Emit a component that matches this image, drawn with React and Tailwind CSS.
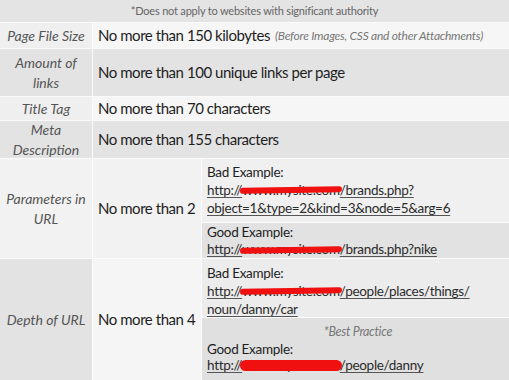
import React from 'react';

const font = { fontFamily: 'Lato, "Open Sans", sans-serif' };

// red marker stroke that hides the domain name
const Redact = ({ children, thick }) => (
  <span className="relative inline-block">
    {children}
    <span
      className={`absolute left-[-2px] right-[-2px] rounded-full bg-[#f01010] ${thick ? 'top-[3px] h-[11px]' : 'top-[6px] h-[6px] -rotate-1'}`}
    />
  </span>
);

const Url = ({ children }) => (
  <div className="underline decoration-[#555] underline-offset-2 text-[#2b2b2b] whitespace-nowrap">{children}</div>
);

const Label = ({ children, className = '' }) => (
  <div className={`w-[92px] shrink-0 flex items-center justify-center text-center italic text-[14px] leading-[20px] text-[#555] px-1 ${className}`}>
    {children}
  </div>
);

const main = 'text-[15px] tracking-[-0.45px] text-[#1e1e1e] whitespace-nowrap';

export default function App() {
  return (
    <div className="w-[509px] h-[380px] bg-[#fbfbfb] flex flex-col gap-px overflow-hidden" style={font}>
      {/* header note */}
      <div className="h-[22px] shrink-0 bg-[#e4e4e4] flex items-center justify-center text-[11px] tracking-[-0.2px] text-[#666]">
        *Does not apply to websites with significant authority
      </div>

      <div className="h-[25px] shrink-0 flex gap-px">
        <Label className="bg-[#efefef]">Page File Size</Label>
        <div className={`flex-1 bg-[#f6f6f6] flex items-center pl-[5px] ${main}`}>
          No more than 150 kilobytes
          <span className="ml-[5px] italic text-[12px] tracking-[-0.25px] text-[#777]">(Before Images, CSS and other Attachments)</span>
        </div>
      </div>

      <div className="h-[47px] shrink-0 flex gap-px">
        <Label className="bg-[#e3e3e3]">Amount of links</Label>
        <div className={`flex-1 bg-[#e3e3e3] flex items-center pl-[5px] ${main}`}>
          No more than 100 unique links per page
        </div>
      </div>

      <div className="h-[23px] shrink-0 flex gap-px">
        <Label className="bg-[#efefef]">Title Tag</Label>
        <div className={`flex-1 bg-[#f6f6f6] flex items-center pl-[5px] ${main}`}>
          No more than 70 characters
        </div>
      </div>

      <div className="h-[37px] shrink-0 flex gap-px">
        <Label className="bg-[#e3e3e3]">Meta Description</Label>
        <div className={`flex-1 bg-[#e3e3e3] flex items-center pl-[5px] ${main}`}>
          No more than 155 characters
        </div>
      </div>

      <div className="h-[99px] shrink-0 flex gap-px">
        <Label className="bg-[#f2f2f2]">Parameters in URL</Label>
        <div className={`w-[108px] shrink-0 bg-[#f2f2f2] flex items-center pl-[5px] ${main}`}>
          No more than 2
        </div>
        <div className="flex-1 flex flex-col gap-px text-[13.5px] tracking-[-0.3px] leading-[18px] text-[#1e1e1e]">
          <div className="h-[63px] shrink-0 bg-[#f0f0f0] pl-[5px] pt-[4px]">
            <div>Bad Example:</div>
            <Url>http://<Redact>www.mysite.com</Redact>/brands.php?</Url>
            <Url>object=1&amp;type=2&amp;kind=3&amp;node=5&amp;arg=6</Url>
          </div>
          <div className="flex-1 bg-[#e2e2e2] pl-[5px] pt-[1px] leading-[17px]">
            <div>Good Example:</div>
            <Url>http://<Redact>www.mysite.com</Redact>/brands.php?nike</Url>
          </div>
        </div>
      </div>

      <div className="flex-1 flex gap-px">
        <Label className="bg-[#e3e3e3]">Depth of URL</Label>
        <div className={`w-[108px] shrink-0 bg-[#f5f5f5] flex items-center pl-[5px] ${main}`}>
          No more than 4
        </div>
        <div className="flex-1 flex flex-col gap-px text-[13.5px] tracking-[-0.3px] leading-[18px] text-[#1e1e1e]">
          <div className="h-[58px] shrink-0 bg-[#ececec] pl-[5px] pt-[5px]">
            <div>Bad Example:</div>
            <Url>http://<Redact>www.mysite.com</Redact>/people/places/things/</Url>
            <Url>noun/danny/car</Url>
          </div>
          <div className="flex-1 bg-[#e0e0e0] pl-[5px] pt-[6px] leading-[16.5px]">
            <div className="text-center italic text-[12.5px] text-[#777]">*Best Practice</div>
            <div>Good Example:</div>
            <Url>http://<Redact thick>www.mysite.com</Redact>/people/danny</Url>
          </div>
        </div>
      </div>
    </div>
  );
}
